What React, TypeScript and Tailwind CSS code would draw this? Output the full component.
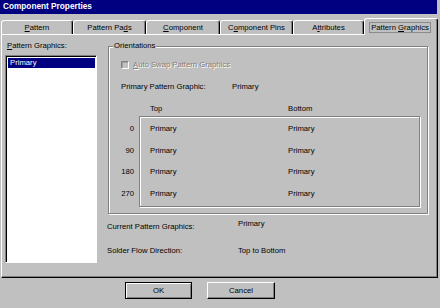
import React from "react";

const rows = ["0", "90", "180", "270"];

function Tab({ w, children }: { w: string; children: React.ReactNode }) {
  return (
    <div
      className={`${w} h-[14px] flex items-center justify-center border-t border-l border-r border-t-white border-l-white border-r-black rounded-t-[3px] shadow-[inset_-1px_0_0_#808080] pt-[1px]`}
    >
      {children}
    </div>
  );
}

export default function App() {
  return (
    <div className="w-[440px] h-[308px] bg-[#c0c0c0] overflow-hidden font-['Liberation_Sans',Arial,sans-serif] text-[7.7px] leading-[10px] text-black">
      <div className="h-[14px] w-[437px] bg-[#000080] text-white font-bold text-[8.25px] flex items-center pl-[3px]">
        Component Properties
      </div>

      <div className="mt-[4px] h-[16px] flex items-end pl-[1px]">
        <Tab w="w-[72px]">
          <span><u>P</u>attern</span>
        </Tab>
        <Tab w="w-[73px]">
          <span>Pattern Pa<u>d</u>s</span>
        </Tab>
        <Tab w="w-[74px]">
          <span><u>C</u>omponent</span>
        </Tab>
        <Tab w="w-[73px]">
          <span>C<u>o</u>mponent Pins</span>
        </Tab>
        <Tab w="w-[71px]">
          <span>A<u>t</u>tributes</span>
        </Tab>
        <div className="w-[74px] h-[17px] mb-[-1px] relative z-10 bg-[#c0c0c0] border-t border-l border-r border-t-white border-l-white border-r-black rounded-t-[3px] shadow-[inset_-1px_0_0_#808080] pt-[3px] pl-[4px]">
          <div className="w-[62px] h-[11px] border border-[#8c8c8c] flex items-center justify-center">
            <span>Pattern <u>G</u>raphics</span>
          </div>
        </div>
      </div>

      <div className="w-[437px] ml-[1px] h-[244px] border-t border-l border-r border-b border-t-white border-l-white border-r-black border-b-black shadow-[inset_-1px_-1px_0_#808080] flex pl-[3px]">
        <div className="w-[92px] pt-[6px] flex flex-col">
          <div className="h-[10px] ml-[2px]">
            <u>P</u>attern Graphics:
          </div>
          <div className="mt-[4px] h-[208px] bg-white border-t border-l border-r border-b border-t-[#808080] border-l-[#808080] border-r-white border-b-white shadow-[inset_1px_1px_0_#000] p-[1px] pl-[2px] pt-[2px]">
            <div className="h-[10px] bg-[#000080] text-white pl-[2px] flex items-center">
              Primary
            </div>
          </div>
        </div>

        <div className="ml-[11px] pt-[11px] flex flex-col">
          <div className="relative w-[320px] h-[168px] border border-[#808080] shadow-[inset_1px_1px_0_#fff,1px_1px_0_#fff] pl-[12px] flex flex-col">
            <span className="absolute left-[4px] top-[-6px] px-[1px] bg-[#c0c0c0] h-[10px]">
              Orientations
            </span>

            <div className="mt-[13px] h-[9px] flex items-center">
              <div className="w-[8px] h-[8px] border-t border-l border-r border-b border-t-[#808080] border-l-[#808080] border-r-white border-b-white bg-[#c0c0c0] shadow-[inset_1px_1px_0_#a0a0a0]" />
              <span className="ml-[4px] text-[#808080] [text-shadow:1px_1px_0_#fff]">
                <u>A</u>uto Swap Pattern Graphics
              </span>
            </div>

            <div className="mt-[13px] h-[10px] flex items-center">
              <span className="w-[111px]">Primary Pattern Graphic:</span>
              <span>Primary</span>
            </div>

            <div className="mt-[12px] h-[10px] flex items-center">
              <span className="w-[29px]" />
              <span className="w-[138px]">Top</span>
              <span>Bottom</span>
            </div>

            <div className="mt-[2px] flex">
              <div className="w-[18px] pt-[2px] pr-[5px] flex flex-col">
                {rows.map((r) => (
                  <div key={r} className="h-[21.7px] flex items-center justify-end">
                    {r}
                  </div>
                ))}
              </div>
              <div className="w-[281px] h-[91px] border border-[#808080] shadow-[inset_1px_1px_0_#fff,1px_1px_0_#fff] pt-[1px] flex flex-col">
                {rows.map((r) => (
                  <div key={r} className="h-[21.7px] flex items-center pl-[10px]">
                    <span className="w-[138px]">Primary</span>
                    <span>Primary</span>
                  </div>
                ))}
              </div>
            </div>
          </div>

          <div className="ml-[-1px] mt-[8px] h-[10px] flex items-start">
            <span className="w-[131px] leading-[10px]">Current Pattern Graphics:</span>
            <span className="mt-[-3px] leading-[10px]">Primary</span>
          </div>
          <div className="ml-[-1px] mt-[14px] h-[10px] flex items-center">
            <span className="w-[131px]">Solder Flow Direction:</span>
            <span>Top to Bottom</span>
          </div>
        </div>
      </div>

      <div className="mt-[4px] flex pl-[125px] gap-[15px]">
        <div className="w-[67px] h-[17px] border border-black shadow-[inset_1px_1px_0_#fff,inset_-1px_-1px_0_#808080] flex items-center justify-center">
          OK
        </div>
        <div className="w-[68px] h-[17px] border-t border-l border-r border-b border-t-white border-l-white border-r-black border-b-black shadow-[inset_-1px_-1px_0_#808080] flex items-center justify-center">
          Cancel
        </div>
      </div>
    </div>
  );
}
